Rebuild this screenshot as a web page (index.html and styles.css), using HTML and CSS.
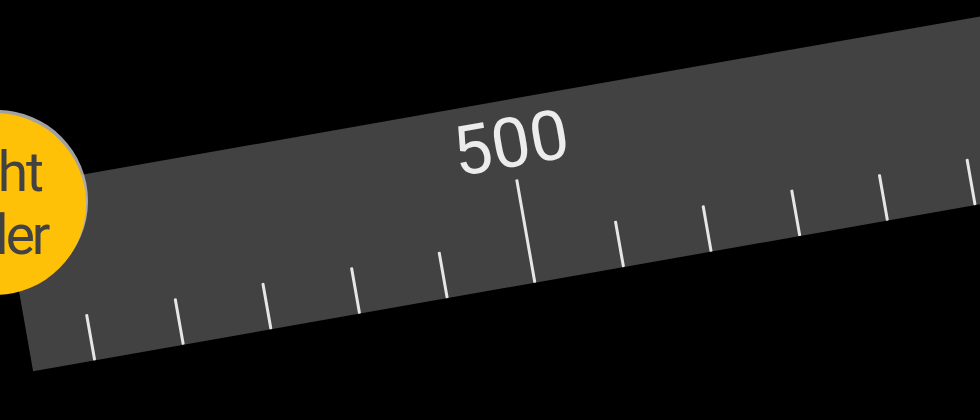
FILE: index.html
```html
<!DOCTYPE html>
<html>
<head>
<meta charset="utf-8">
<link rel="stylesheet" href="styles.css">
</head>
<body>
<div class="stage">
  <div class="badge">
    <span class="badge-line first">Light</span>
    <span class="badge-line second">Ruler</span>
  </div>
  <div class="ruler">
    <div class="label">500</div>
    <div class="ticks">
      <div class="tick"></div>
      <div class="tick"></div>
      <div class="tick"></div>
      <div class="tick"></div>
      <div class="tick"></div>
      <div class="tick long"></div>
      <div class="tick"></div>
      <div class="tick"></div>
      <div class="tick"></div>
      <div class="tick"></div>
      <div class="tick"></div>
      <div class="tick"></div>
      <div class="tick"></div>
    </div>
  </div>
</div>
</body>
</html>
```

FILE: styles.css
```css
html, body {
  margin: 0;
  padding: 0;
  background: #000;
}
.stage {
  position: relative;
  width: 980px;
  height: 420px;
  overflow: hidden;
  background: #000;
  display: flex;
  align-items: flex-start;
}
.ruler {
  flex: none;
  margin-left: 1px;
  margin-top: 189px;
  width: 1150px;
  height: 185px;
  background: #424242;
  transform-origin: 0 0;
  transform: rotate(-10deg);
  display: flex;
  flex-direction: column;
}
.label {
  margin-top: 9px;
  margin-left: 410px;
  width: 200px;
  text-align: center;
  font-family: Roboto, "Noto Sans", sans-serif;
  font-size: 69px;
  line-height: 69px;
  color: #ececec;
}
.ticks {
  flex: 1;
  display: flex;
  align-items: flex-end;
  gap: 86.4px;
  padding-left: 61.4px;
}
.tick {
  width: 3px;
  height: 47px;
  background: #e6e6e6;
  border-radius: 1px;
}
.tick.long {
  height: 105px;
}
.badge {
  position: absolute;
  left: -96px;
  top: 113px;
  width: 182px;
  height: 182px;
  box-sizing: border-box;
  padding-right: 38.5px;
  border-radius: 50%;
  background: #ffc107;
  box-shadow: 2px -3px 0 rgba(190, 190, 190, 0.85);
  display: flex;
  flex-direction: column;
  align-items: flex-end;
  justify-content: center;
  z-index: 2;
  font-family: Roboto, "Noto Sans", sans-serif;
  font-size: 55px;
  line-height: 63px;
  color: #424242;
}
.badge-line {
  display: block;
  white-space: nowrap;
}
.badge-line.first {
  letter-spacing: -2px;
  margin-right: 5.5px;
}
.badge-line.second {
  letter-spacing: -3px;
}
```
